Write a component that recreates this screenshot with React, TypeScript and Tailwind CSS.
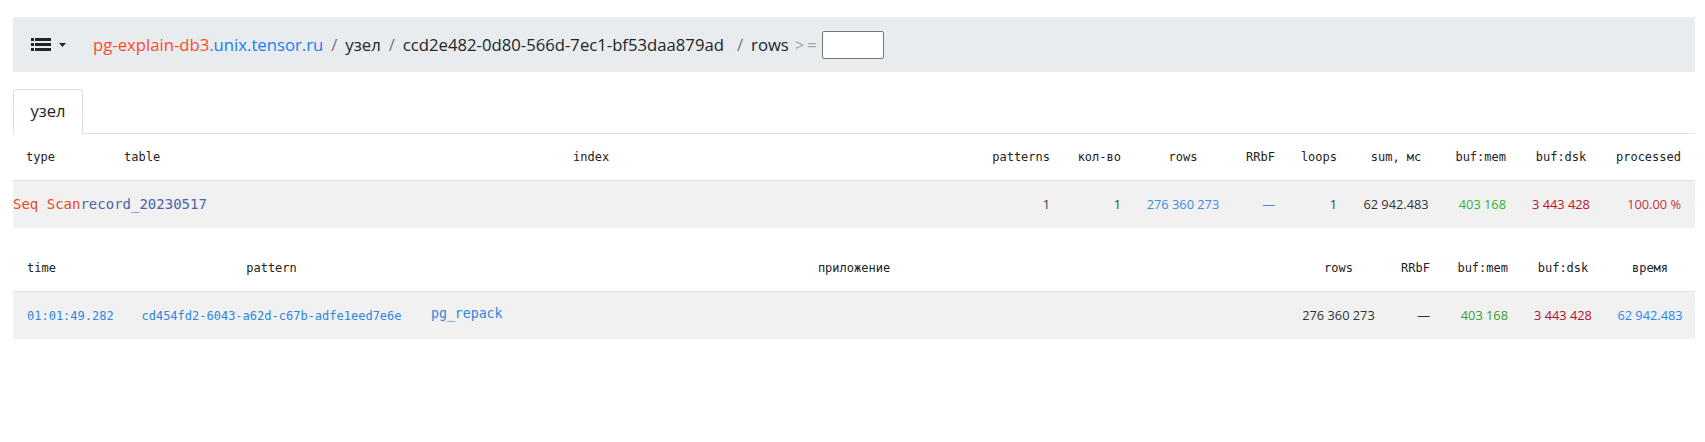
import React from 'react';

const mono = { fontFamily: '"DejaVu Sans Mono", "Liberation Mono", monospace' };
const sans = { fontFamily: '"Open Sans", "Noto Sans", sans-serif' };

const ListIcon = () => (
  <svg width="20" height="13" viewBox="0 0 20 13" className="block">
    <rect x="0" y="0" width="3" height="3" fill="#212529" />
    <rect x="4" y="0" width="16" height="3" fill="#212529" />
    <rect x="0" y="5" width="3" height="3" fill="#212529" />
    <rect x="4" y="5" width="16" height="3" fill="#212529" />
    <rect x="0" y="10" width="3" height="3" fill="#212529" />
    <rect x="4" y="10" width="16" height="3" fill="#212529" />
  </svg>
);

const Sep = () => <span className="px-2 text-[#6c757d]">/</span>;

export default function App() {
  return (
    <div className="bg-white min-h-[442px] pl-[13px] pr-[10px] pt-[17px] text-[#212529]" style={sans}>
      {/* breadcrumb */}
      <div className="flex items-center h-[55px] bg-[#e9ecef] pl-[18px] text-[16.7px]">
        <div className="flex items-center gap-[8px]">
          <ListIcon />
          <svg width="7" height="4" viewBox="0 0 7 4"><path d="M0 0h7L3.5 4z" fill="#212529" /></svg>
        </div>
        <div className="flex items-center ml-[27px]">
          <span>
            <span className="text-[#ff4b1f]">pg-explain-db3</span>
            <span className="text-[#1a7cf5]">.unix.tensor.ru</span>
          </span>
          <Sep />
          <span>узел</span>
          <Sep />
          <span className="mr-[5px]">ccd2e482-0d80-566d-7ec1-bf53daa879ad</span>
          <Sep />
          <span>rows</span>
          <span className="ml-[6px] text-[#a3a3a3] tracking-[3px]">&gt;=</span>
          <input className="ml-[2px] w-[62px] h-[28px] border border-[#767676] rounded-[2px] bg-white" />
        </div>
      </div>

      {/* tabs */}
      <div className="mt-[17px] flex border-b border-[#dee2e6]">
        <div className="w-[70px] h-[45px] -mb-px flex items-center justify-center border border-[#dee2e6] border-b-white rounded-t-[4px] bg-white text-[16.5px]">
          узел
        </div>
      </div>

      {/* node table */}
      <div className="flex h-[47px] items-center text-[12px] text-[#222] border-b border-[#dee2e6]" style={mono}>
        <div className="w-[98px] pl-[13px]">type</div>
        <div className="w-[449px] pl-[13px]">table</div>
        <div className="flex-1 pl-[13px]">index</div>
        <div className="w-[113px] pr-[13px] text-right">patterns</div>
        <div className="w-[71px] pr-[13px] text-right">кол-во</div>
        <div className="w-[98px] text-center">rows</div>
        <div className="w-[56px] pr-[13px] text-right">RRbF</div>
        <div className="w-[62px] pr-[13px] text-right">loops</div>
        <div className="w-[92px] text-center">sum, мс</div>
        <div className="w-[77px] pr-[13px] text-right">buf:mem</div>
        <div className="w-[84px] text-center">buf:dsk</div>
        <div className="w-[92px] pr-[14px] text-right">processed</div>
      </div>
      <div className="flex h-[47px] items-center bg-[#f1f1f1] text-[12.8px]">
        <div className="w-[547px] text-[14px] whitespace-nowrap" style={mono}>
          <span className="text-[#ea4a1c]">Seq Scan</span>
          <span className="text-[#4a64a8]">record_20230517</span>
        </div>
        <div className="flex-1" />
        <div className="w-[113px] pr-[13px] text-right text-[#34405e]">1</div>
        <div className="w-[71px] pr-[13px] text-right text-[#34405e]">1</div>
        <div className="w-[98px] text-center text-[#3b8ee6]">276 360 273</div>
        <div className="w-[56px] pr-[13px] text-right text-[#3b8ee6]">—</div>
        <div className="w-[62px] pr-[13px] text-right text-[#34405e]">1</div>
        <div className="w-[92px] text-center text-[#333]">62 942.483</div>
        <div className="w-[77px] pr-[13px] text-right text-[#2fb52f]">403 168</div>
        <div className="w-[84px] text-center text-[#c0102a]">3 443 428</div>
        <div className="w-[92px] pr-[14px] text-right text-[#c8303a]">100.00 %</div>
      </div>

      {/* patterns table */}
      <div className="mt-[17px] flex h-[47px] items-center text-[12px] text-[#222] border-b border-[#dee2e6]" style={mono}>
        <div className="w-[112px] pl-[14px]">time</div>
        <div className="w-[293px] text-center">pattern</div>
        <div className="flex-1 text-center">приложение</div>
        <div className="w-[97px] text-center">rows</div>
        <div className="w-[56px] pr-[13px] text-right">RRbF</div>
        <div className="w-[78px] pr-[13px] text-right">buf:mem</div>
        <div className="w-[84px] text-center">buf:dsk</div>
        <div className="w-[90px] text-center">время</div>
      </div>
      <div className="flex h-[47px] items-center bg-[#f1f1f1] text-[12.8px]">
        <div className="w-[112px] pl-[14px] text-[12px] text-[#2e86de]" style={mono}>01:01:49.282</div>
        <div className="w-[293px] text-center text-[12px] text-[#2e86de]" style={mono}>
          cd454fd2-6043-a62d-c67b-adfe1eed7e6e
        </div>
        <div className="flex-1 pl-[13px] text-[13.2px] text-[#2e86de] -mt-[3px]" style={mono}>pg_repack</div>
        <div className="w-[97px] text-center text-[#333]">276 360 273</div>
        <div className="w-[56px] pr-[13px] text-right text-[#333]">—</div>
        <div className="w-[78px] pr-[13px] text-right text-[#3a9c30]">403 168</div>
        <div className="w-[84px] text-center text-[#b0102a]">3 443 428</div>
        <div className="w-[90px] text-center text-[#2a85f0]">62 942.483</div>
      </div>
    </div>
  );
}
